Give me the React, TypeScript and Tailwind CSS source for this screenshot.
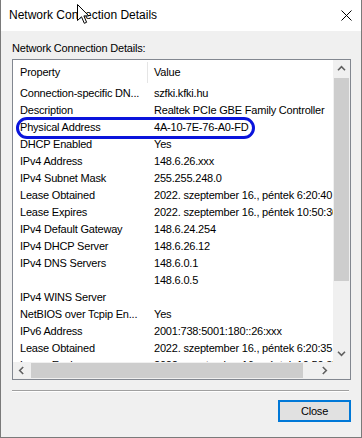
import React from 'react';

const rows: [string, string][] = [
  ['Connection-specific DN...', 'szfki.kfki.hu'],
  ['Description', 'Realtek PCIe GBE Family Controller'],
  ['Physical Address', '4A-10-7E-76-A0-FD'],
  ['DHCP Enabled', 'Yes'],
  ['IPv4 Address', '148.6.26.xxx'],
  ['IPv4 Subnet Mask', '255.255.248.0'],
  ['Lease Obtained', '2022. szeptember 16., péntek 6:20:40'],
  ['Lease Expires', '2022. szeptember 16., péntek 10:50:36'],
  ['IPv4 Default Gateway', '148.6.24.254'],
  ['IPv4 DHCP Server', '148.6.26.12'],
  ['IPv4 DNS Servers', '148.6.0.1'],
  ['', '148.6.0.5'],
  ['IPv4 WINS Server', ''],
  ['NetBIOS over Tcpip En...', 'Yes'],
  ['IPv6 Address', '2001:738:5001:180::26:xxx'],
  ['Lease Obtained', '2022. szeptember 16., péntek 6:20:35'],
  ['Lease Expires', '2022. szeptember 16., péntek 10:50:35'],
];

const rotations = {
  up: '',
  right: 'rotate-90',
  down: 'rotate-180',
  left: '-rotate-90',
};

function Chevron({ dir }: { dir: keyof typeof rotations }) {
  return (
    <svg width="9" height="9" viewBox="0 0 9 9" className={rotations[dir]}>
      <path d="M1 6.2 L4.5 2.7 L8 6.2" fill="none" stroke="#606060" strokeWidth="1.6" />
    </svg>
  );
}

export default function App() {
  return (
    <div className="relative w-[362px] h-[438px] bg-[#f0f0f0] border-x border-b border-[#7a7a7a] flex flex-col text-black font-['Liberation_Sans',Arial,sans-serif] overflow-hidden">
      {/* title bar */}
      <div className="h-[31px] shrink-0 bg-white flex items-center justify-between pl-[8px] pr-[9px]">
        <span className="text-[12px] leading-[15px]">Network Connection Details</span>
        <svg width="11" height="11" viewBox="0 0 11 11">
          <path d="M0.5 0.5 L10.5 10.5 M10.5 0.5 L0.5 10.5" stroke="#000" strokeWidth="1" />
        </svg>
      </div>

      <div className="flex-1 flex flex-col pt-[11px] pl-[11px] text-[11px] tracking-[-0.2px]">
        <div className="leading-[13px]">Network Connection Details:</div>

        {/* list box */}
        <div className="mt-[4px] w-[339px] h-[321px] border border-[#828790] bg-white flex flex-col">
          <div className="flex h-[302px]">
            <div className="w-[320px] overflow-hidden">
              <div className="flex h-[25px] leading-[25px]">
                <div className="w-[134px] pl-[7px]">Property</div>
                <div className="w-px h-[21px] mt-[2px] bg-[#e5e5e5]" />
                <div className="pl-[6px]">Value</div>
              </div>
              {rows.map(([k, v], i) => (
                <div key={i} className="flex h-[17px] leading-[17px] whitespace-nowrap">
                  <div className="w-[135px] shrink-0 pl-[7px]">{k}</div>
                  <div className="pl-[6px]">{v}</div>
                </div>
              ))}
            </div>
            {/* vertical scrollbar */}
            <div className="w-[17px] bg-[#f0f0f0] flex flex-col">
              <div className="h-[17px] flex items-center justify-center">
                <Chevron dir="up" />
              </div>
              <div className="flex-1 pt-[1px] px-[1px]">
                <div className="h-[203px] bg-[#cdcdcd]" />
              </div>
              <div className="h-[17px] flex items-center justify-center">
                <Chevron dir="down" />
              </div>
            </div>
          </div>
          {/* horizontal scrollbar */}
          <div className="flex h-[17px] bg-[#f0f0f0]">
            <div className="w-[320px] flex">
              <div className="w-[17px] flex items-center justify-center">
                <Chevron dir="left" />
              </div>
              <div className="flex-1 py-[1px] pl-[1px]">
                <div className="w-[272px] h-full bg-[#cdcdcd]" />
              </div>
              <div className="w-[17px] flex items-center justify-center">
                <Chevron dir="right" />
              </div>
            </div>
            <div className="w-[17px]" />
          </div>
        </div>

        {/* etched separator */}
        <div className="mt-[10px] w-[337px] h-px bg-[#a0a0a0]" />
        <div className="w-[337px] h-px bg-white" />

        <div className="mt-[8px] w-[339px] flex justify-end">
          <button className="w-[73px] h-[22px] bg-[#e1e1e1] border-2 border-[#0078d7] text-[11px] leading-[18px] tracking-[-0.2px]">
            Close
          </button>
        </div>
      </div>

      {/* annotation around the physical address row */}
      <div className="absolute left-[15px] top-[117px] w-[239px] h-[22px] border-[3px] border-[#0a14dc] rounded-full" />

      {/* mouse pointer */}
      <svg className="absolute left-[76px] top-[4px]" width="13" height="21" viewBox="0 0 13 21">
        <path d="M0.5 0.5 L0.5 16.5 L4.5 12.8 L7.3 19.3 L9.6 18.3 L6.9 11.9 L11.8 11.9 Z" fill="#fff" stroke="#000" strokeWidth="1" strokeLinejoin="miter" />
      </svg>
    </div>
  );
}
